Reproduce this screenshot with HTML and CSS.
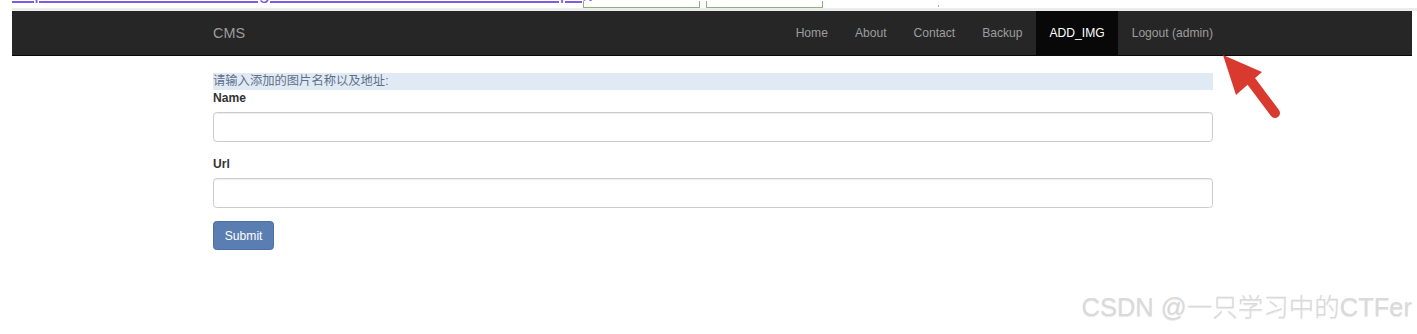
FILE: index.html
```html
<!DOCTYPE html>
<html>
<head>
<meta charset="utf-8">
<link rel="stylesheet" href="styles.css">
</head>
<body>
<div class="strip">
  <a class="toplink" href="#">https://cdn.website.com/images/2021101510345678abcdefhk.png</a>
  <span class="gbox gbox-a"></span>
  <span class="gbox gbox-b"></span>
  <span class="tick"></span>
</div>
<div class="page">
  <nav class="navbar">
    <div class="container nav-inner">
      <a class="brand" href="#">CMS</a>
      <ul class="nav">
        <li><a href="#">Home</a></li>
        <li><a href="#">About</a></li>
        <li><a href="#">Contact</a></li>
        <li><a href="#">Backup</a></li>
        <li class="active"><a href="#">ADD_IMG</a></li>
        <li><a href="#">Logout (admin)</a></li>
      </ul>
    </div>
  </nav>
  <main class="container content">
    <div class="hint">请输入添加的图片名称以及地址:</div>
    <form class="form">
      <div class="group">
        <label class="label">Name</label>
        <input class="input" type="text">
      </div>
      <div class="group">
        <label class="label">Url</label>
        <input class="input" type="text">
      </div>
      <button class="btn" type="button">Submit</button>
    </form>
  </main>
</div>
<svg class="arrow" width="80" height="80" viewBox="0 0 80 80">
  <line x1="28" y1="26" x2="52" y2="58" stroke="#d93a2f" stroke-width="10" stroke-linecap="round"/>
  <polygon points="0,0 39,17 13,40" fill="#d93a2f"/>
</svg>
<div class="watermark">CSDN @一只学习中的CTFer</div>
</body>
</html>
```

FILE: styles.css
```css
html, body {
  margin: 0;
  padding: 0;
  background: #fff;
}
body {
  width: 1417px;
  height: 334px;
  overflow: hidden;
  position: relative;
  font-family: "Liberation Sans", Arial, "Noto Sans CJK SC", sans-serif;
  font-size: 12.1px;
  color: #333;
}
.strip {
  position: relative;
  height: 8px;
  overflow: hidden;
  margin-left: 12px;
  border-bottom: 3px solid #ececec;
}
.toplink {
  display: block;
  font-size: 20px;
  line-height: 20px;
  margin-top: -18px;
  color: #7c5ce6;
  text-decoration: underline;
  text-decoration-thickness: 2px;
  text-underline-offset: 2px;
  white-space: nowrap;
}
.gbox {
  position: absolute;
  bottom: 0;
  height: 6px;
  border: 1px solid #8fb07f;
  border-top: none;
  background: #fff;
}
.gbox-a { left: 571px; width: 115px; }
.gbox-b { left: 694px; width: 115px; }
.tick {
  position: absolute;
  left: 926px;
  bottom: 1px;
  width: 1px;
  height: 2px;
  background: #aaa;
}
.page {
  width: 1400px;
  margin-left: 12px;
}
.container {
  width: 1000px;
  margin-left: 201px;
}
.navbar {
  background: #262626;
  border-bottom: 1px solid #080808;
  height: 44px;
}
.nav-inner {
  display: flex;
  align-items: stretch;
  justify-content: space-between;
  height: 44px;
}
.brand {
  display: flex;
  align-items: center;
  font-size: 14.4px;
  color: #9d9d9d;
  text-decoration: none;
}
.nav {
  display: flex;
  list-style: none;
  margin: 0 -13.5px 0 0;
  padding: 0;
}
.nav li a {
  display: flex;
  align-items: center;
  height: 44px;
  padding: 0 13.5px;
  color: #9d9d9d;
  text-decoration: none;
}
.nav li.active a {
  background: #080808;
  color: #fff;
}
.content {
  padding-top: 17px;
}
.hint {
  background: #dfeaf5;
  color: #5f7089;
  font-size: 12.3px;
  line-height: 17px;
  height: 17px;
}
.form {
  display: flex;
  flex-direction: column;
  align-items: flex-start;
}
.group {
  display: flex;
  flex-direction: column;
  width: 100%;
  margin-bottom: 13.5px;
}
.label {
  font-weight: bold;
  line-height: 17px;
  margin-bottom: 5px;
  color: #333;
}
.input {
  box-sizing: border-box;
  width: 100%;
  height: 30px;
  margin: 0;
  border: 1px solid #ccc;
  border-radius: 3.6px;
  box-shadow: inset 0 1px 1px rgba(0,0,0,.075);
  background: #fff;
}
.btn {
  box-sizing: border-box;
  height: 29px;
  padding: 0 10.8px;
  border: 1px solid #4a6fa5;
  border-radius: 3.6px;
  background: #5a7db2;
  color: #fff;
  font-family: "Liberation Sans", Arial, sans-serif;
  font-size: 12.1px;
}
.arrow {
  position: absolute;
  left: 1223px;
  top: 55px;
}
.watermark {
  position: absolute;
  right: 5px;
  top: 290px;
  font-family: "Liberation Sans", Arial, "Noto Sans CJK SC", sans-serif;
  font-size: 25.5px;
  font-weight: 300;
  line-height: 34px;
  color: #dadada;
  text-shadow: 0 1px 1px rgba(0,0,0,.1);
  white-space: nowrap;
}
```
